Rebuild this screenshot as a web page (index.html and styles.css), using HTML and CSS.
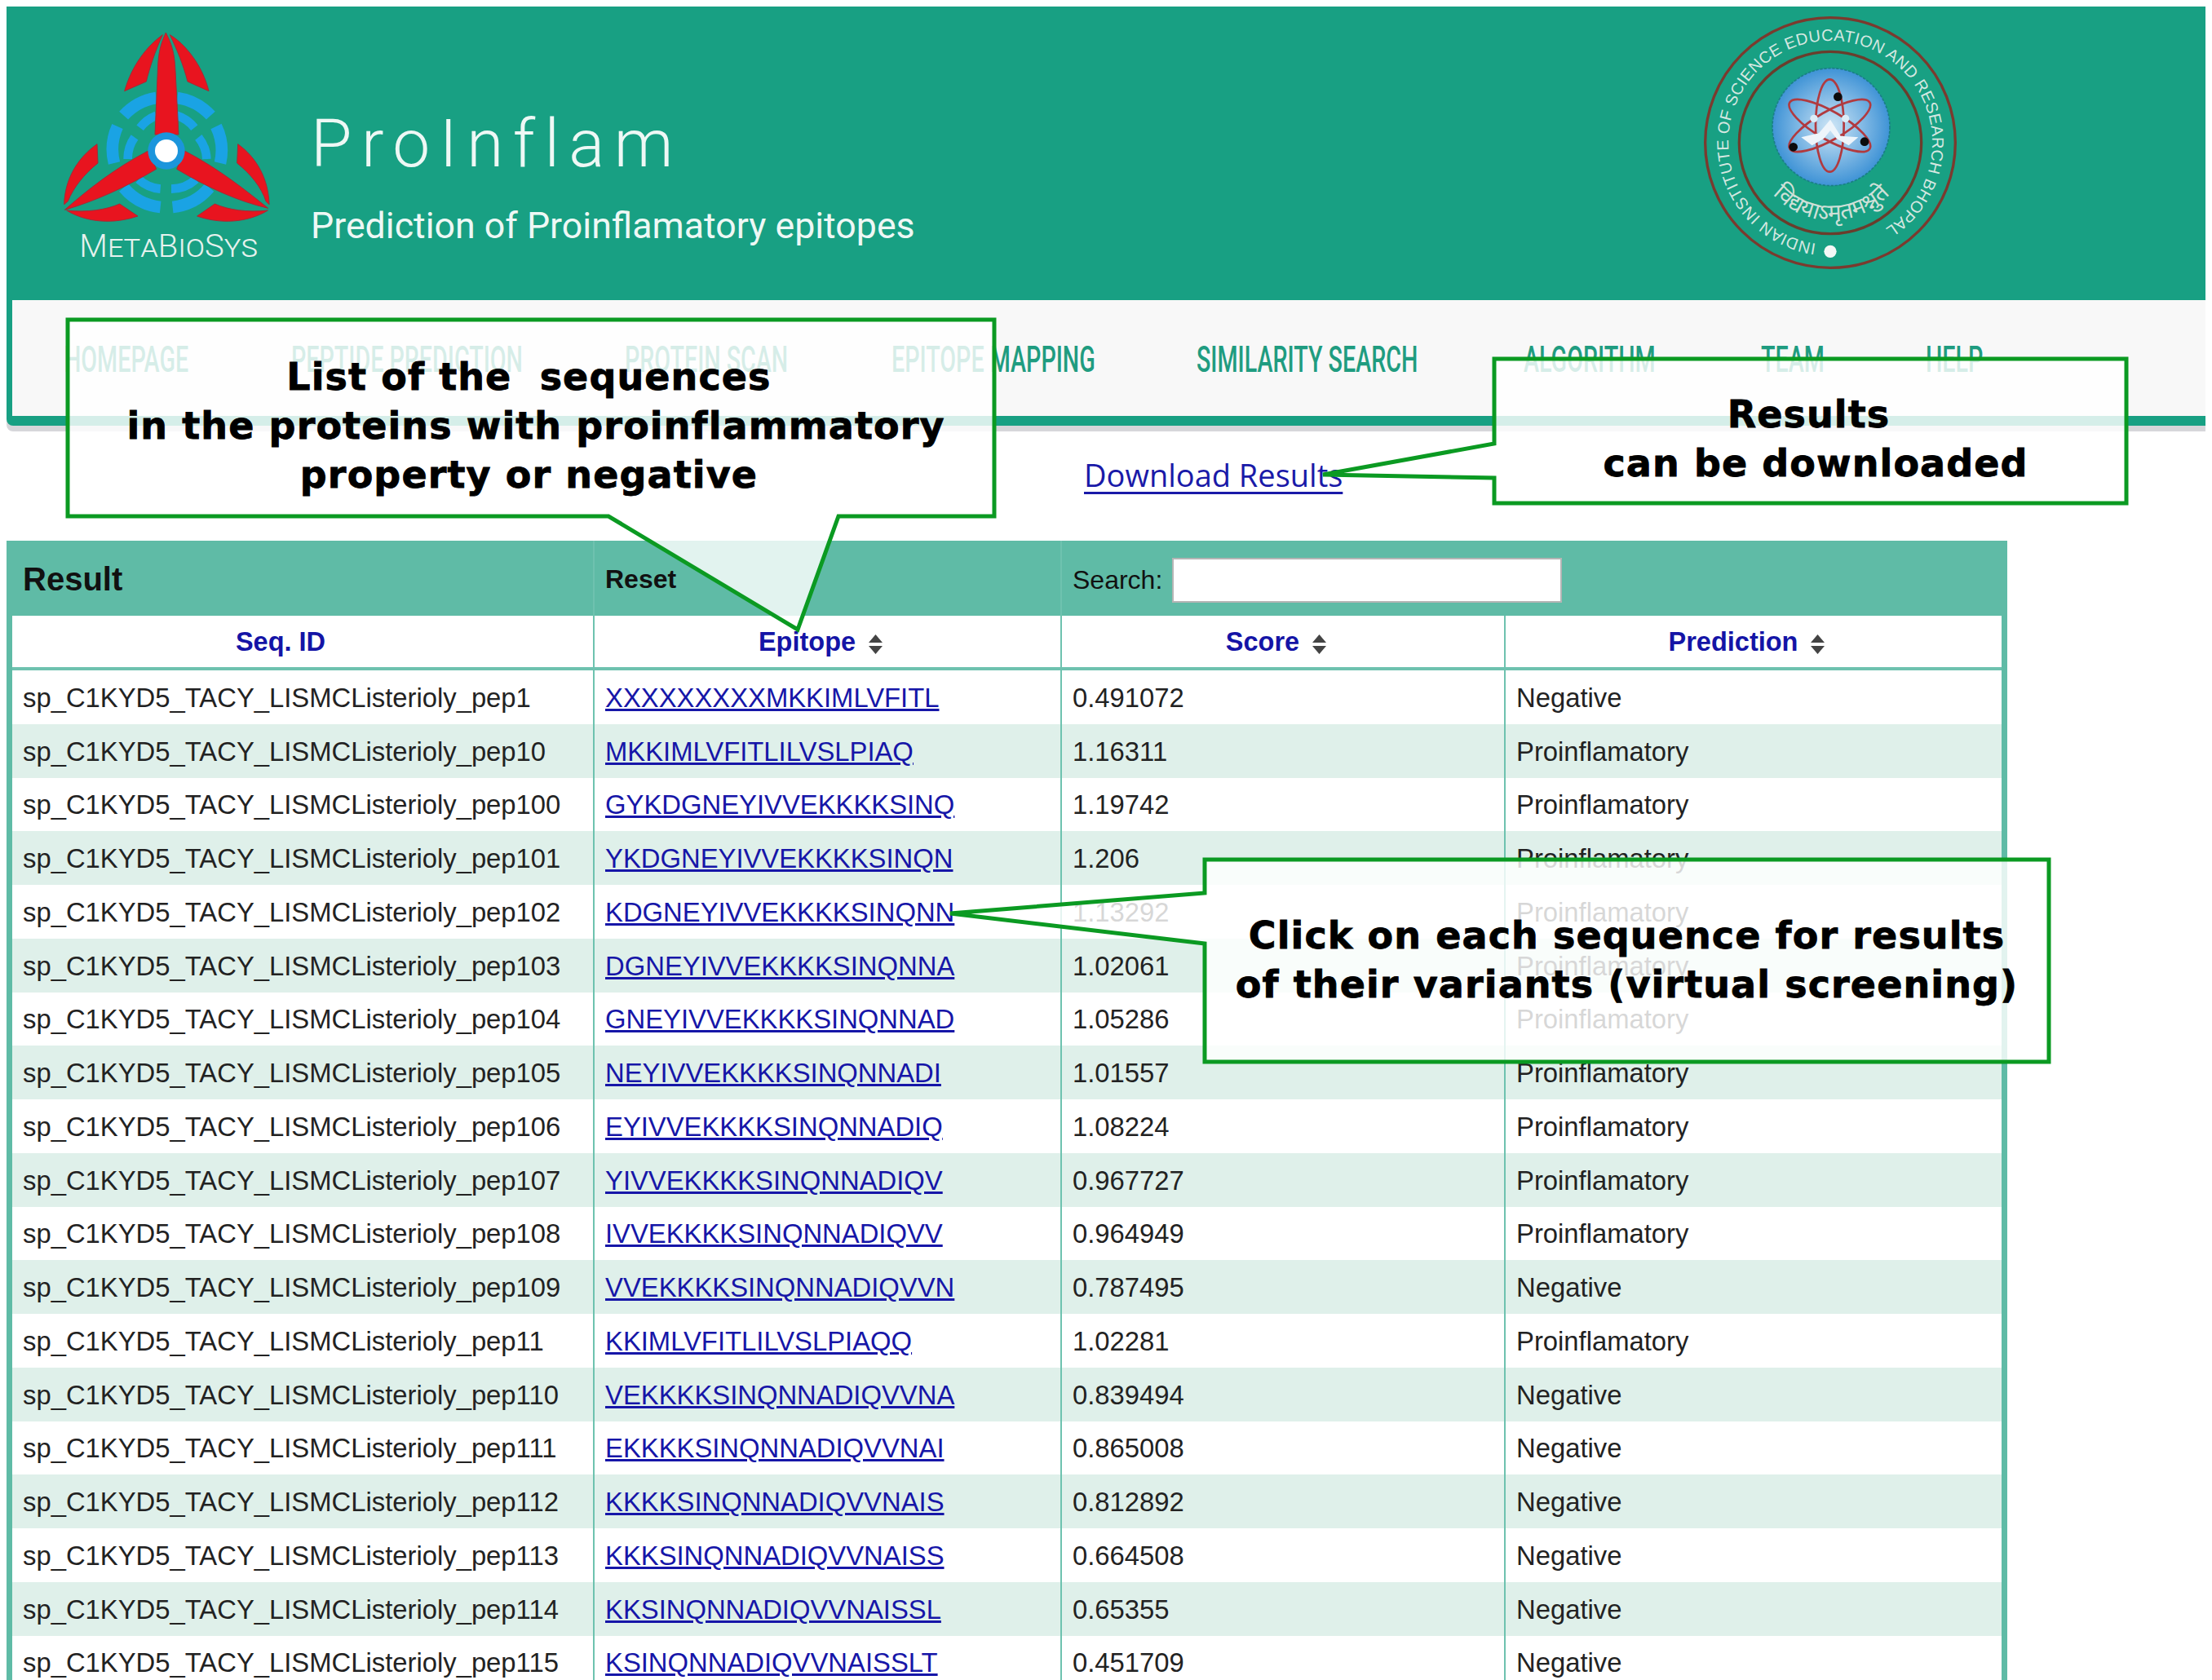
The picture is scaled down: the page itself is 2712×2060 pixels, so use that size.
FILE: index.html
```html
<!DOCTYPE html>
<html lang="en">
<head>
  <meta charset="UTF-8">
  <title>ProInflam - Results</title>
  <link rel="stylesheet" href="styles.css">
</head>
<body>
  <div class="pagina">
    <header class="topo">
      <svg class="logo-meta" viewBox="0 0 960 960">
        <g fill="none" stroke="#1aa3e4" stroke-width="44">
          <path d="M335 365A205 205 0 0 1 455 300M532 300A205 205 0 0 1 655 365M312 405A205 205 0 0 0 300 540M335 630A205 205 0 0 0 470 702M515 702A205 205 0 0 0 650 630M675 405A205 205 0 0 1 690 540"/>
          <path stroke-width="32" d="M395 410A135 135 0 0 1 455 365M530 365A135 135 0 0 1 595 410M375 445A135 135 0 0 0 350 525M610 445A135 135 0 0 1 640 525M390 600A135 135 0 0 0 470 635M510 635A135 135 0 0 0 600 600"/>
        </g>
        <g fill="#e8141f" stroke="#a52a35" stroke-width="3">
          <path d="M490 60C510 100 522 130 525 200L537 435H450L460 200C462 130 472 100 490 60Z"/>
          <path d="M478 68C420 110 365 180 338 275L418 240C430 190 450 130 478 68Z"/>
          <path d="M505 68C560 100 625 180 648 275L570 240C555 180 530 120 505 68Z"/>
          <path d="M118 712C200 640 300 560 425 495L455 562C340 630 230 680 118 712Z"/>
          <path d="M866 706C784 640 684 560 559 495L530 562C644 630 754 680 866 706Z"/>
          <path d="M237 470L240 540C190 580 150 630 130 680L116 692C118 600 165 520 237 470Z"/>
          <path d="M755 470L752 540C802 580 842 630 858 680L870 692C868 600 825 520 755 470Z"/>
          <path d="M320 690L387 735C300 765 200 760 125 714C200 722 270 712 320 690Z"/>
          <path d="M670 690L605 735C690 765 790 760 865 714C790 722 720 712 670 690Z"/>
        </g>
        <circle cx="492" cy="495" r="68" fill="#1b95dc"/>
        <circle cx="492" cy="495" r="42" fill="#fff"/>
        <text class="logo-meta-nome" x="172" y="884" textLength="656" lengthAdjust="spacingAndGlyphs">MetaBioSys</text>
      </svg>
      <div class="titulo">
        <h1>ProInflam</h1>
        <p>Prediction of Proinflamatory epitopes</p>
      </div>
      <svg class="logo-iiser" viewBox="0 24 1050 1050">
        <defs>
          <radialGradient id="azul">
            <stop offset="0" stop-color="#cfe6f6"/>
            <stop offset="1" stop-color="#3f93d6"/>
          </radialGradient>
          <path id="arco-nome" d="M470 896A375 375 0 1 1 587 894"/>
          <path id="arco-lema" d="M262 640A290 290 0 0 0 790 640"/>
        </defs>
        <circle cx="522" cy="525" r="460" fill="none" stroke="#7b3a2e" stroke-width="10"/>
        <circle cx="522" cy="525" r="335" fill="none" stroke="#6a3d2c" stroke-width="10"/>
        <circle cx="525" cy="467" r="216" fill="url(#azul)" stroke="#1a7f86" stroke-width="5" stroke-dasharray="10 5"/>
        <g fill="none" stroke="#b13a3f" stroke-width="8">
          <ellipse cx="520" cy="462" rx="52" ry="170"/>
          <ellipse cx="520" cy="462" rx="52" ry="170" transform="rotate(60 520 462)"/>
          <ellipse cx="520" cy="462" rx="52" ry="170" transform="rotate(-60 520 462)"/>
        </g>
        <path d="M522 440L560 500L625 505L590 535L545 510L522 480L498 510L455 535L415 505L480 490Z" fill="#eef5fb"/>
        <circle cx="462" cy="436" r="14" fill="#dcecf7"/>
        <circle cx="578" cy="436" r="14" fill="#dcecf7"/>
        <circle cx="550" cy="356" r="16" fill="#0c0c0c"/>
        <circle cx="386" cy="541" r="16" fill="#0c0c0c"/>
        <circle cx="648" cy="521" r="16" fill="#0c0c0c"/>
        <circle cx="522" cy="925" r="23" fill="#f4f8f6"/>
        <text class="logo-iiser-nome"><textPath href="#arco-nome" textLength="2090">INDIAN INSTITUTE OF SCIENCE EDUCATION AND RESEARCH BHOPAL</textPath></text>
        <text class="logo-iiser-lema"><textPath href="#arco-lema" startOffset="50%" text-anchor="middle">विद्ययाऽमृतमश्नुते</textPath></text>
      </svg>
    </header>

    <nav class="menu">
      <a href="#">HOMEPAGE</a>
      <a href="#">PEPTIDE PREDICTION</a>
      <a href="#">PROTEIN SCAN</a>
      <a href="#">EPITOPE MAPPING</a>
      <a href="#">SIMILARITY SEARCH</a>
      <a href="#">ALGORITHM</a>
      <a href="#">TEAM</a>
      <a href="#">HELP</a>
    </nav>

    <div class="download"><a href="#">Download Results</a></div>

    <table class="resultado">
      <colgroup>
        <col class="col-id"><col class="col-epitope"><col class="col-score"><col class="col-pred">
      </colgroup>
      <thead>
        <tr class="faixa">
          <th class="faixa-titulo">Result</th>
          <th class="faixa-reset">Reset</th>
          <th colspan="2" class="faixa-busca"><div class="busca"><label>Search:</label><input type="text"></div></th>
        </tr>
        <tr class="colunas">
          <th class="sem-seta">Seq. ID</th>
          <th>Epitope<svg class="seta" viewBox="0 0 19 24"><path d="M9.5 0L18 10H1ZM1 14H18L9.5 24Z"/></svg></th>
          <th>Score<svg class="seta" viewBox="0 0 19 24"><path d="M9.5 0L18 10H1ZM1 14H18L9.5 24Z"/></svg></th>
          <th>Prediction<svg class="seta" viewBox="0 0 19 24"><path d="M9.5 0L18 10H1ZM1 14H18L9.5 24Z"/></svg></th>
        </tr>
      </thead>
      <tbody>
        <tr><td>sp_C1KYD5_TACY_LISMCListerioly_pep1</td><td><a href="#">XXXXXXXXXMKKIMLVFITL</a></td><td>0.491072</td><td>Negative</td></tr>
        <tr><td>sp_C1KYD5_TACY_LISMCListerioly_pep10</td><td><a href="#">MKKIMLVFITLILVSLPIAQ</a></td><td>1.16311</td><td>Proinflamatory</td></tr>
        <tr><td>sp_C1KYD5_TACY_LISMCListerioly_pep100</td><td><a href="#">GYKDGNEYIVVEKKKKSINQ</a></td><td>1.19742</td><td>Proinflamatory</td></tr>
        <tr><td>sp_C1KYD5_TACY_LISMCListerioly_pep101</td><td><a href="#">YKDGNEYIVVEKKKKSINQN</a></td><td>1.206</td><td>Proinflamatory</td></tr>
        <tr><td>sp_C1KYD5_TACY_LISMCListerioly_pep102</td><td><a href="#">KDGNEYIVVEKKKKSINQNN</a></td><td>1.13292</td><td>Proinflamatory</td></tr>
        <tr><td>sp_C1KYD5_TACY_LISMCListerioly_pep103</td><td><a href="#">DGNEYIVVEKKKKSINQNNA</a></td><td>1.02061</td><td>Proinflamatory</td></tr>
        <tr><td>sp_C1KYD5_TACY_LISMCListerioly_pep104</td><td><a href="#">GNEYIVVEKKKKSINQNNAD</a></td><td>1.05286</td><td>Proinflamatory</td></tr>
        <tr><td>sp_C1KYD5_TACY_LISMCListerioly_pep105</td><td><a href="#">NEYIVVEKKKKSINQNNADI</a></td><td>1.01557</td><td>Proinflamatory</td></tr>
        <tr><td>sp_C1KYD5_TACY_LISMCListerioly_pep106</td><td><a href="#">EYIVVEKKKKSINQNNADIQ</a></td><td>1.08224</td><td>Proinflamatory</td></tr>
        <tr><td>sp_C1KYD5_TACY_LISMCListerioly_pep107</td><td><a href="#">YIVVEKKKKSINQNNADIQV</a></td><td>0.967727</td><td>Proinflamatory</td></tr>
        <tr><td>sp_C1KYD5_TACY_LISMCListerioly_pep108</td><td><a href="#">IVVEKKKKSINQNNADIQVV</a></td><td>0.964949</td><td>Proinflamatory</td></tr>
        <tr><td>sp_C1KYD5_TACY_LISMCListerioly_pep109</td><td><a href="#">VVEKKKKSINQNNADIQVVN</a></td><td>0.787495</td><td>Negative</td></tr>
        <tr><td>sp_C1KYD5_TACY_LISMCListerioly_pep11</td><td><a href="#">KKIMLVFITLILVSLPIAQQ</a></td><td>1.02281</td><td>Proinflamatory</td></tr>
        <tr><td>sp_C1KYD5_TACY_LISMCListerioly_pep110</td><td><a href="#">VEKKKKSINQNNADIQVVNA</a></td><td>0.839494</td><td>Negative</td></tr>
        <tr><td>sp_C1KYD5_TACY_LISMCListerioly_pep111</td><td><a href="#">EKKKKSINQNNADIQVVNAI</a></td><td>0.865008</td><td>Negative</td></tr>
        <tr><td>sp_C1KYD5_TACY_LISMCListerioly_pep112</td><td><a href="#">KKKKSINQNNADIQVVNAIS</a></td><td>0.812892</td><td>Negative</td></tr>
        <tr><td>sp_C1KYD5_TACY_LISMCListerioly_pep113</td><td><a href="#">KKKSINQNNADIQVVNAISS</a></td><td>0.664508</td><td>Negative</td></tr>
        <tr><td>sp_C1KYD5_TACY_LISMCListerioly_pep114</td><td><a href="#">KKSINQNNADIQVVNAISSL</a></td><td>0.65355</td><td>Negative</td></tr>
        <tr><td>sp_C1KYD5_TACY_LISMCListerioly_pep115</td><td><a href="#">KSINQNNADIQVVNAISSLT</a></td><td>0.451709</td><td>Negative</td></tr>
      </tbody>
    </table>

    <svg class="balao-svg" viewBox="0 0 2712 2060">
      <path d="M83 392H1219V633H1028L978 772L746 633H83Z"/>
      <path d="M1832 440H2607V617H1832V586L1622 582L1832 544Z"/>
      <path d="M1477 1054H2512V1302H1477V1157L1165 1120L1477 1095Z"/>
    </svg>
    <div class="balao balao-lista">List of the&nbsp; sequences&nbsp;<br>in the proteins with proinflammatory<br>property or negative&nbsp;</div>
    <div class="balao balao-download">Results&nbsp;<br>can be downloaded</div>
    <div class="balao balao-clique">Click on each sequence for results<br>of their variants (virtual screening)</div>
  </div>
</body>
</html>
```

FILE: styles.css
```css
body { margin: 0; background: white; font-family: "Liberation Sans", Arial, sans-serif; }
.pagina {
  position: relative;
  width: 2712px;
  height: 2060px;
  overflow: hidden;
  padding: 8px 8px 0;
  box-sizing: border-box;
}

.topo {
  height: 360px;
  background: #18a083;
  display: flex;
  align-items: flex-start;
}
.logo-meta { width: 320px; height: 320px; margin: 12px 0 0 32px; flex: none; }
.logo-meta-nome { font-family: "Roboto", sans-serif; font-weight: 300; font-variant: small-caps; font-size: 118px; fill: #e6f2ee; }
.titulo { margin-left: 21px; color: #eef8f5; }
.titulo h1 {
  margin: 120px 0 0;
  font-family: "Roboto", sans-serif;
  font-weight: 300;
  font-size: 82px;
  line-height: 96px;
  letter-spacing: 11.5px;
}
.titulo p {
  margin: 25px 0 0;
  font-family: "Roboto", sans-serif;
  font-size: 44.7px;
  line-height: 56px;
}
.logo-iiser { width: 350px; height: 350px; margin-left: auto; margin-right: 284px; flex: none; }
.logo-iiser-nome { font-family: "Liberation Sans", sans-serif; font-size: 60px; fill: #d5e8e1; }
.logo-iiser-lema { font-family: "Noto Sans", sans-serif; font-size: 84px; fill: #cfe0d8; }

.menu {
  height: 139px;
  background: #f8f8f8;
  border-left: 7px solid #18a083;
  border-bottom: 12px solid #18a083;
  border-bottom-left-radius: 8px;
  box-shadow: 0 7px 0 #d6d6da;
  padding: 3px 0 0 64px;
  display: flex;
  align-items: center;
  gap: 127px;
}
.menu a {
  color: #1f9c80;
  text-decoration: none;
  font-family: "Roboto", sans-serif;
  font-weight: 500;
  font-size: 44px;
  white-space: nowrap;
  transform: scaleX(0.652);
  transform-origin: left center;
}
.menu a:nth-child(1) { width: 151px; }
.menu a:nth-child(2) { width: 282px; }
.menu a:nth-child(3) { width: 200px; }
.menu a:nth-child(4) { width: 247px; }
.menu a:nth-child(5) { width: 274px; }
.menu a:nth-child(6) { width: 164px; }
.menu a:nth-child(7) { width: 75px; }
.menu a:nth-child(8) { width: 69px; }

.download { height: 141px; padding-left: 1321px; box-sizing: border-box; padding-top: 32px; }
.download a {
  font-family: "Open Sans", sans-serif;
  font-size: 38px;
  line-height: 56px;
  color: #1a1aa8;
  text-underline-offset: 6px;
}

.resultado {
  width: 2453px;
  table-layout: fixed;
  border-collapse: separate;
  border-spacing: 0;
  border: solid #5fbba6;
  border-width: 0 7px;
  font-size: 32.8px;
  color: #222;
}
.col-id { width: 712px; }
.col-epitope { width: 573px; }
.col-score { width: 544px; }
.col-pred { width: 610px; }

.faixa { height: 92px; background: #5fbba6; color: #111; text-align: left; }
.faixa th { padding: 2px 13px 0; border-left: 2px solid #6ec2af; }
.faixa th:first-child { border-left: none; }
.faixa-titulo { font-size: 40px; }
.faixa-reset { font-size: 32px; }
.faixa .faixa-busca { padding-top: 5px; }
.busca { display: flex; align-items: center; gap: 12px; font-weight: normal; font-size: 32px; }
.busca input {
  width: 478px;
  height: 55px;
  box-sizing: border-box;
  background: white;
  border: 2px solid #b5b5b5;
  margin: 0;
}

.colunas { height: 67px; }
.colunas th {
  color: #1414a6;
  font-size: 32.5px;
  text-align: center;
  border-left: 2px solid #6ec2af;
  border-bottom: 4px solid #6ec2af;
  padding: 2px 16px 0 0;
}
.colunas th:first-child { border-left: none; }
.colunas .sem-seta { padding-right: 54px; }
.seta { width: 19px; height: 24px; margin-left: 15px; vertical-align: -4px; fill: #444; }

.resultado tbody tr { height: 65.75px; }
.resultado tbody tr:nth-child(even) { background: #dff0ea; }
.resultado td { padding: 2px 13px 0; border-left: 2px solid #6ec2af; white-space: nowrap; }
.resultado td:first-child { border-left: none; }
.resultado td a { color: #1616a8; }

.balao-svg { position: absolute; left: 0; top: 0; width: 2712px; height: 2060px; }
.balao-svg path { fill: rgba(255, 255, 255, 0.82); stroke: #0b9a22; stroke-width: 5; }
.balao {
  position: absolute;
  font-family: "DejaVu Sans", sans-serif;
  font-weight: bold;
  font-size: 46px;
  line-height: 60px;
  letter-spacing: 1.1px;
  -webkit-text-stroke: 0.8px black;
  color: black;
  text-align: center;
  white-space: nowrap;
}
.balao-lista { left: 83px; width: 1148px; top: 432px; }
.balao-download { left: 1834px; width: 784px; top: 478px; }
.balao-clique { left: 1477px; width: 1035px; top: 1117px; }
```
